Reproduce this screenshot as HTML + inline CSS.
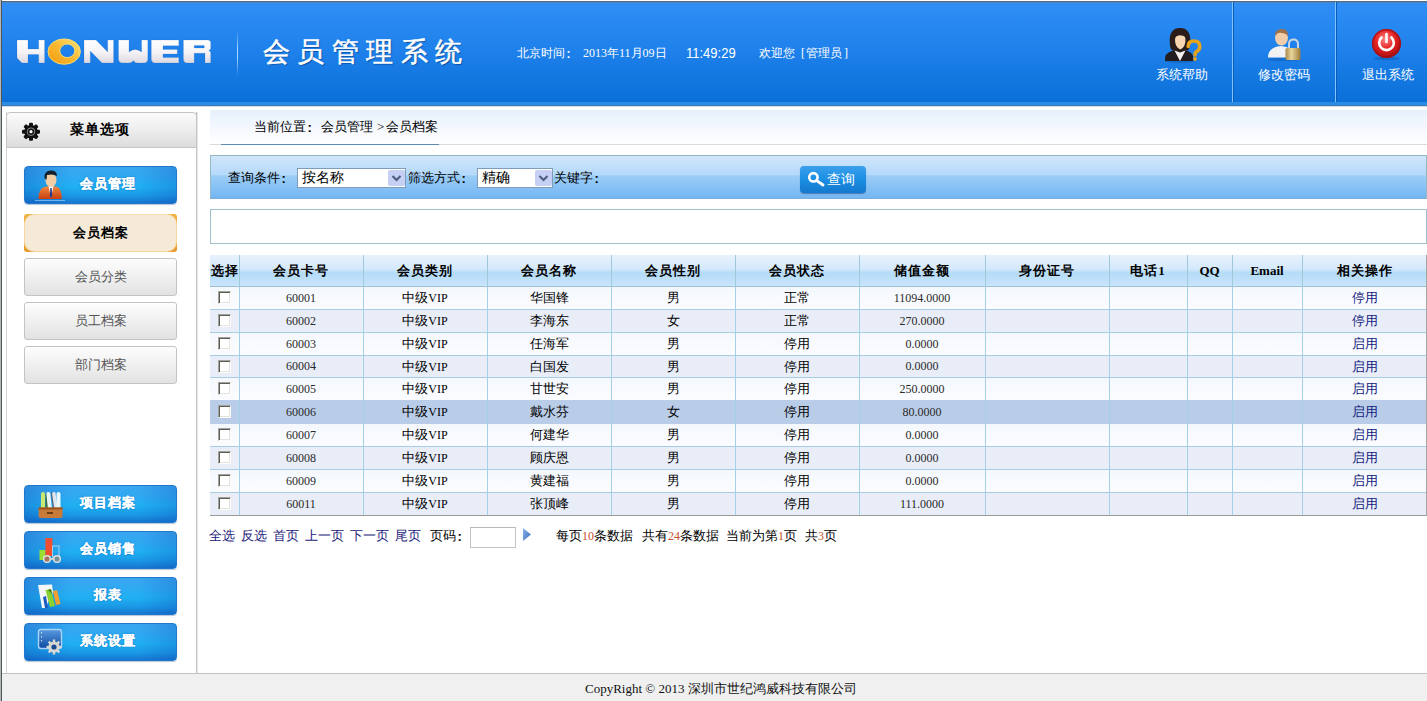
<!DOCTYPE html>
<html><head><meta charset="utf-8">
<style>
*{margin:0;padding:0;box-sizing:border-box}
html,body{width:1427px;height:701px;overflow:hidden;background:#fff}
body{position:relative;font-family:"Liberation Serif",serif;font-size:12px;color:#000}
.a{position:absolute}
.s{font-family:"Liberation Sans",sans-serif}
#hdr{left:0;top:2px;width:1427px;height:100px;background:linear-gradient(#4a84c4,#2f8ef5 2%,#2c8cf4 10%,#1e80ea 50%,#0a70d8)}
.vd{position:absolute;top:2px;width:2px;height:100px;background:linear-gradient(90deg,#7fc4fb 50%,#0a5cb8 50%)}
.ht{position:absolute;color:#fff;font-size:12px;white-space:nowrap;line-height:14px}
.hi{position:absolute;color:#fff;font-size:13px;white-space:nowrap;text-align:center;line-height:16px}
#panel{left:6px;top:112px;width:191px;height:561px;border-left:1px solid #d4d4d4;border-right:1px solid #c4c4c4;background:#fff;box-shadow:1px 0 0 #e6e6e6}
#ph{left:6px;top:112px;width:191px;height:36px;border:1px solid #c4c4c4;border-radius:4px 4px 0 0;background:linear-gradient(#fbfbfb,#f0f0f0 40%,#dcdcdc)}
.bb{position:absolute;left:24px;width:153px;height:38px;border-radius:4px;border:1px solid #1f78cc;background:linear-gradient(90deg,rgba(10,60,170,.28),rgba(10,60,170,0) 30%,rgba(10,60,170,0) 75%,rgba(10,60,170,.22)),linear-gradient(#3aa6f0,#2eaaf2 30%,#20b0f2 55%,#1a98e6 80%,#1676d0);box-shadow:0 1px 1px rgba(0,60,120,.3)}
.bb span{position:absolute;left:13px;top:-2px;-webkit-text-stroke:0.3px #fff;width:139px;text-align:center;line-height:38px;color:#fff;font-weight:bold;font-size:13px;letter-spacing:1px;text-shadow:0 0 2px #0a5ab0;white-space:nowrap}

.gb{position:absolute;left:24px;width:153px;height:38px;border:1px solid #c4c4c4;border-radius:3px;background:linear-gradient(#fdfdfd,#f0f0f0 50%,#e2e2e2);text-align:center;line-height:36px;color:#555;font-size:13px}
#crumb{left:210px;top:110px;width:1217px;height:34px;background:linear-gradient(#e6f1fc,#f6f9fe 60%,#fff)}
#sbar{left:210px;top:155px;width:1217px;height:44px;border:1px solid #94b8c4;border-bottom-color:#7aaed8;background:linear-gradient(#d0e6fb,#b4d9fa 45%,#9ccdf7 47%,#74b6f2)}
.sel{position:absolute;height:20px;border:1px solid #7f9db9;background:#fff;font-size:14px;line-height:18px;padding-left:4px;color:#000}
.sel i{position:absolute;right:1px;top:1px;width:17px;height:16px;background:#c6d4f2;border-radius:2px}
#res{left:210px;top:209px;width:1217px;height:35px;border:1px solid #a0c0cc;background:#fff}
.th{background:linear-gradient(#e8f2fd,#d4e9fb 45%,#b4dbf8 58%,#c9e5fb)}
.ro{background:linear-gradient(#f4f8fd,#fbfcff)}
.re{background:#e8edf8}
.hd{top:255px;height:31px;line-height:31px;text-align:center;font-size:13px;font-weight:bold;letter-spacing:1px;white-space:nowrap}
.td{text-align:center;font-size:13px;color:#000;white-space:nowrap}
.td.num{color:#2a2a2a;font-size:12px}
.td.op{color:#121a7c}
.cb{width:13px;height:13px;border:1px solid;border-color:#a4a49c #fcfcfc #fcfcfc #a4a49c;background:#fff;box-shadow:inset 1px 1px 0 #5c5c56,inset -1px -1px 0 #e4e4dc}
#foot{left:2px;top:673px;width:1425px;height:28px;border-top:1px solid #c2c2c2;background:#f0f0f0}
.lk{color:#1a1a7a}
.rd{color:#c8502a}
.sp{display:inline-block;width:6px}
.cl{display:inline-block;position:relative;top:1px;width:1em;text-indent:0.12em;font-family:"Liberation Sans",sans-serif;font-weight:bold}

</style></head>
<body>
<div class="a" style="left:0;top:0;width:1427px;height:1px;background:#fff"></div>
<div class="a" style="left:0;top:1px;width:1427px;height:1px;background:#5a6878"></div>
<div id="hdr" class="a"></div>
<div class="a" style="left:0;top:102px;width:1427px;height:3px;background:#2a8ce2"></div>
<div class="a" style="left:0;top:105px;width:1427px;height:1px;background:#3c78bc"></div>
<div class="a" style="left:0;top:106px;width:1427px;height:1px;background:#d2dde6"></div>
<div class="vd" style="left:237px;top:30px;height:46px;width:1px;background:linear-gradient(rgba(160,210,255,0),#a8d8ff 40%,#a8d8ff 60%,rgba(160,210,255,0))"></div>
<div class="vd" style="left:1232px"></div>
<div class="vd" style="left:1335px"></div>
<!-- LOGO -->
<div class="a" style="left:263px;top:34px;color:#fff;font-size:27px;line-height:36px;letter-spacing:7.4px;white-space:nowrap;-webkit-text-stroke:0.5px #fff;text-shadow:1px 1px 1px #0a4a9a">会员管理系统</div>
<div class="ht" style="left:517px;top:46px">北京时间<span class="cl">:</span><span class="sp"></span>2013年11月09日</div>
<div class="ht s" style="left:686px;top:46px;font-size:13px;line-height:16px;transform:scaleY(1.12);transform-origin:0 100%">11:49:29</div>
<div class="ht" style="left:759px;top:46px">欢迎您<span class="sp"></span>[<span style="margin:0 2px 0 1px">管理员</span>]</div>
<div class="hi" style="left:1156px;top:67px;width:52px">系统帮助</div>
<div class="hi" style="left:1258px;top:67px;width:52px">修改密码</div>
<div class="hi" style="left:1362px;top:67px;width:52px">退出系统</div>

<div id="panel" class="a"></div>
<div id="ph" class="a"></div>
<div class="a" style="left:70px;top:121px;font-size:14px;font-weight:bold;line-height:18px;letter-spacing:1px">菜单选项</div>
<div class="bb" style="top:166px"><span>会员管理</span></div>
<div class="a" style="left:24px;top:214px;width:153px;height:38px;border-radius:3px;background:linear-gradient(#f0b040,#e89a28);"><div class="a" style="left:1px;top:1px;width:151px;height:36px;border-radius:9px;background:#f5e9d7;box-shadow:0 0 0 1px rgba(255,250,235,.6);text-align:center;line-height:36px;font-weight:bold;font-size:13px;letter-spacing:1px">会员档案</div></div>
<div class="gb" style="top:258px">会员分类</div>
<div class="gb" style="top:302px">员工档案</div>
<div class="gb" style="top:346px">部门档案</div>
<div class="bb" style="top:485px"><span>项目档案</span></div>
<div class="bb" style="top:531px"><span>会员销售</span></div>
<div class="bb" style="top:577px"><span>报表</span></div>
<div class="bb" style="top:623px"><span>系统设置</span></div>

<div id="crumb" class="a"></div>
<div class="a" style="left:210px;top:144px;width:1217px;height:1px;background:#dadada"></div>
<div class="a" style="left:221px;top:144px;width:218px;height:1px;background:#5a8cb4"></div>
<div style="position:absolute;line-height:16px;white-space:nowrap;font-size:13px;left:254px;top:119px">当前位置<span class="cl">:</span></div><div style="position:absolute;line-height:16px;white-space:nowrap;font-size:13px;left:321px;top:119px">会员管理</div><div style="position:absolute;line-height:16px;white-space:nowrap;font-size:13px;left:377px;top:119px">&gt;</div><div style="position:absolute;line-height:16px;white-space:nowrap;font-size:13px;left:386px;top:119px">会员档案</div>
<div id="sbar" class="a"></div>
<div style="position:absolute;line-height:16px;white-space:nowrap;font-size:13px;left:228px;top:170px">查询条件<span class="cl">:</span></div>
<div class="sel" style="left:297px;top:168px;width:109px">按名称</div>
<div style="position:absolute;line-height:16px;white-space:nowrap;font-size:13px;left:408px;top:170px">筛选方式<span class="cl">:</span></div>
<div class="sel" style="left:477px;top:168px;width:76px">精确</div>
<div style="position:absolute;line-height:16px;white-space:nowrap;font-size:13px;left:554px;top:170px">关键字<span class="cl">:</span></div>
<div class="a" style="left:800px;top:166px;width:66px;height:27px;border-radius:4px;background:linear-gradient(#3ba0ec,#1b8ee4 50%,#1478cc);box-shadow:0 1px 1px rgba(0,40,100,.4)"><span style="position:absolute;left:27px;top:5px;color:#fff;font-size:14px;line-height:17px">查询</span></div>
<div id="res" class="a"></div>
<div class="a th" style="left:210px;top:255px;width:1217px;height:31px"></div>
<div class="a ro" style="left:210px;top:287px;width:1217px;height:22px"></div>
<div class="a re" style="left:210px;top:310px;width:1217px;height:22px"></div>
<div class="a ro" style="left:210px;top:333px;width:1217px;height:22px"></div>
<div class="a re" style="left:210px;top:356px;width:1217px;height:21px"></div>
<div class="a ro" style="left:210px;top:378px;width:1217px;height:22px"></div>
<div class="a" style="left:210px;top:400px;width:1217px;height:24px;background:#bacde8"></div>
<div class="a ro" style="left:210px;top:424px;width:1217px;height:22px"></div>
<div class="a re" style="left:210px;top:447px;width:1217px;height:22px"></div>
<div class="a ro" style="left:210px;top:470px;width:1217px;height:22px"></div>
<div class="a re" style="left:210px;top:493px;width:1217px;height:22px"></div>
<div class="a" style="left:210px;top:286px;width:1217px;height:1px;background:#a0c0cc"></div>
<div class="a" style="left:210px;top:309px;width:1217px;height:1px;background:#a6cde4"></div>
<div class="a" style="left:210px;top:332px;width:1217px;height:1px;background:#a6cde4"></div>
<div class="a" style="left:210px;top:355px;width:1217px;height:1px;background:#a6cde4"></div>
<div class="a" style="left:210px;top:377px;width:1217px;height:1px;background:#a6cde4"></div>
<div class="a" style="left:210px;top:446px;width:1217px;height:1px;background:#a6cde4"></div>
<div class="a" style="left:210px;top:469px;width:1217px;height:1px;background:#a6cde4"></div>
<div class="a" style="left:210px;top:492px;width:1217px;height:1px;background:#a6cde4"></div>
<div class="a" style="left:210px;top:515px;width:1217px;height:1px;background:#9a9a9a"></div>
<div class="a" style="left:239px;top:255px;width:1px;height:31px;background:#a0c8d8"></div>
<div class="a" style="left:239px;top:286px;width:1px;height:229px;background:#a6d0ea"></div>
<div class="a" style="left:363px;top:255px;width:1px;height:31px;background:#a0c8d8"></div>
<div class="a" style="left:363px;top:286px;width:1px;height:229px;background:#a6d0ea"></div>
<div class="a" style="left:487px;top:255px;width:1px;height:31px;background:#a0c8d8"></div>
<div class="a" style="left:487px;top:286px;width:1px;height:229px;background:#a6d0ea"></div>
<div class="a" style="left:611px;top:255px;width:1px;height:31px;background:#a0c8d8"></div>
<div class="a" style="left:611px;top:286px;width:1px;height:229px;background:#a6d0ea"></div>
<div class="a" style="left:735px;top:255px;width:1px;height:31px;background:#a0c8d8"></div>
<div class="a" style="left:735px;top:286px;width:1px;height:229px;background:#a6d0ea"></div>
<div class="a" style="left:859px;top:255px;width:1px;height:31px;background:#a0c8d8"></div>
<div class="a" style="left:859px;top:286px;width:1px;height:229px;background:#a6d0ea"></div>
<div class="a" style="left:985px;top:255px;width:1px;height:31px;background:#a0c8d8"></div>
<div class="a" style="left:985px;top:286px;width:1px;height:229px;background:#a6d0ea"></div>
<div class="a" style="left:1109px;top:255px;width:1px;height:31px;background:#a0c8d8"></div>
<div class="a" style="left:1109px;top:286px;width:1px;height:229px;background:#a6d0ea"></div>
<div class="a" style="left:1187px;top:255px;width:1px;height:31px;background:#a0c8d8"></div>
<div class="a" style="left:1187px;top:286px;width:1px;height:229px;background:#a6d0ea"></div>
<div class="a" style="left:1232px;top:255px;width:1px;height:31px;background:#a0c8d8"></div>
<div class="a" style="left:1232px;top:286px;width:1px;height:229px;background:#a6d0ea"></div>
<div class="a" style="left:1302px;top:255px;width:1px;height:31px;background:#a0c8d8"></div>
<div class="a" style="left:1302px;top:286px;width:1px;height:229px;background:#a6d0ea"></div>
<div class="a" style="left:1426px;top:255px;width:1px;height:261px;background:#a4a4a4"></div>
<div class="a hd" style="left:210px;width:29px">选择</div>
<div class="a hd" style="left:239px;width:124px">会员卡号</div>
<div class="a hd" style="left:363px;width:124px">会员类别</div>
<div class="a hd" style="left:487px;width:124px">会员名称</div>
<div class="a hd" style="left:611px;width:124px">会员性别</div>
<div class="a hd" style="left:735px;width:124px">会员状态</div>
<div class="a hd" style="left:859px;width:126px">储值金额</div>
<div class="a hd" style="left:985px;width:124px">身份证号</div>
<div class="a hd" style="left:1109px;width:78px">电话1</div>
<div class="a hd" style="left:1187px;width:45px;letter-spacing:0">QQ</div>
<div class="a hd" style="left:1232px;width:70px;letter-spacing:0">Email</div>
<div class="a hd" style="left:1302px;width:125px">相关操作</div>
<div class="a cb" style="left:218px;top:291px"></div>
<div class="a td num" style="left:239px;top:287px;width:124px;height:22px;line-height:22px">60001</div>
<div class="a td cn" style="left:363px;top:287px;width:124px;height:22px;line-height:22px">中级<span style="font-size:12px">VIP</span></div>
<div class="a td cn" style="left:487px;top:287px;width:124px;height:22px;line-height:22px">华国锋</div>
<div class="a td cn" style="left:611px;top:287px;width:124px;height:22px;line-height:22px">男</div>
<div class="a td cn" style="left:735px;top:287px;width:124px;height:22px;line-height:22px">正常</div>
<div class="a td num" style="left:859px;top:287px;width:126px;height:22px;line-height:22px">11094.0000</div>
<div class="a td op" style="left:1302px;top:287px;width:125px;height:22px;line-height:22px">停用</div>
<div class="a cb" style="left:218px;top:314px"></div>
<div class="a td num" style="left:239px;top:310px;width:124px;height:22px;line-height:22px">60002</div>
<div class="a td cn" style="left:363px;top:310px;width:124px;height:22px;line-height:22px">中级<span style="font-size:12px">VIP</span></div>
<div class="a td cn" style="left:487px;top:310px;width:124px;height:22px;line-height:22px">李海东</div>
<div class="a td cn" style="left:611px;top:310px;width:124px;height:22px;line-height:22px">女</div>
<div class="a td cn" style="left:735px;top:310px;width:124px;height:22px;line-height:22px">正常</div>
<div class="a td num" style="left:859px;top:310px;width:126px;height:22px;line-height:22px">270.0000</div>
<div class="a td op" style="left:1302px;top:310px;width:125px;height:22px;line-height:22px">停用</div>
<div class="a cb" style="left:218px;top:337px"></div>
<div class="a td num" style="left:239px;top:333px;width:124px;height:22px;line-height:22px">60003</div>
<div class="a td cn" style="left:363px;top:333px;width:124px;height:22px;line-height:22px">中级<span style="font-size:12px">VIP</span></div>
<div class="a td cn" style="left:487px;top:333px;width:124px;height:22px;line-height:22px">任海军</div>
<div class="a td cn" style="left:611px;top:333px;width:124px;height:22px;line-height:22px">男</div>
<div class="a td cn" style="left:735px;top:333px;width:124px;height:22px;line-height:22px">停用</div>
<div class="a td num" style="left:859px;top:333px;width:126px;height:22px;line-height:22px">0.0000</div>
<div class="a td op" style="left:1302px;top:333px;width:125px;height:22px;line-height:22px">启用</div>
<div class="a cb" style="left:218px;top:360px"></div>
<div class="a td num" style="left:239px;top:356px;width:124px;height:21px;line-height:21px">60004</div>
<div class="a td cn" style="left:363px;top:356px;width:124px;height:21px;line-height:21px">中级<span style="font-size:12px">VIP</span></div>
<div class="a td cn" style="left:487px;top:356px;width:124px;height:21px;line-height:21px">白国发</div>
<div class="a td cn" style="left:611px;top:356px;width:124px;height:21px;line-height:21px">男</div>
<div class="a td cn" style="left:735px;top:356px;width:124px;height:21px;line-height:21px">停用</div>
<div class="a td num" style="left:859px;top:356px;width:126px;height:21px;line-height:21px">0.0000</div>
<div class="a td op" style="left:1302px;top:356px;width:125px;height:21px;line-height:21px">启用</div>
<div class="a cb" style="left:218px;top:382px"></div>
<div class="a td num" style="left:239px;top:378px;width:124px;height:22px;line-height:22px">60005</div>
<div class="a td cn" style="left:363px;top:378px;width:124px;height:22px;line-height:22px">中级<span style="font-size:12px">VIP</span></div>
<div class="a td cn" style="left:487px;top:378px;width:124px;height:22px;line-height:22px">甘世安</div>
<div class="a td cn" style="left:611px;top:378px;width:124px;height:22px;line-height:22px">男</div>
<div class="a td cn" style="left:735px;top:378px;width:124px;height:22px;line-height:22px">停用</div>
<div class="a td num" style="left:859px;top:378px;width:126px;height:22px;line-height:22px">250.0000</div>
<div class="a td op" style="left:1302px;top:378px;width:125px;height:22px;line-height:22px">启用</div>
<div class="a cb" style="left:218px;top:405px"></div>
<div class="a td num" style="left:239px;top:401px;width:124px;height:22px;line-height:22px">60006</div>
<div class="a td cn" style="left:363px;top:401px;width:124px;height:22px;line-height:22px">中级<span style="font-size:12px">VIP</span></div>
<div class="a td cn" style="left:487px;top:401px;width:124px;height:22px;line-height:22px">戴水芬</div>
<div class="a td cn" style="left:611px;top:401px;width:124px;height:22px;line-height:22px">女</div>
<div class="a td cn" style="left:735px;top:401px;width:124px;height:22px;line-height:22px">停用</div>
<div class="a td num" style="left:859px;top:401px;width:126px;height:22px;line-height:22px">80.0000</div>
<div class="a td op" style="left:1302px;top:401px;width:125px;height:22px;line-height:22px">启用</div>
<div class="a cb" style="left:218px;top:428px"></div>
<div class="a td num" style="left:239px;top:424px;width:124px;height:22px;line-height:22px">60007</div>
<div class="a td cn" style="left:363px;top:424px;width:124px;height:22px;line-height:22px">中级<span style="font-size:12px">VIP</span></div>
<div class="a td cn" style="left:487px;top:424px;width:124px;height:22px;line-height:22px">何建华</div>
<div class="a td cn" style="left:611px;top:424px;width:124px;height:22px;line-height:22px">男</div>
<div class="a td cn" style="left:735px;top:424px;width:124px;height:22px;line-height:22px">停用</div>
<div class="a td num" style="left:859px;top:424px;width:126px;height:22px;line-height:22px">0.0000</div>
<div class="a td op" style="left:1302px;top:424px;width:125px;height:22px;line-height:22px">启用</div>
<div class="a cb" style="left:218px;top:451px"></div>
<div class="a td num" style="left:239px;top:447px;width:124px;height:22px;line-height:22px">60008</div>
<div class="a td cn" style="left:363px;top:447px;width:124px;height:22px;line-height:22px">中级<span style="font-size:12px">VIP</span></div>
<div class="a td cn" style="left:487px;top:447px;width:124px;height:22px;line-height:22px">顾庆恩</div>
<div class="a td cn" style="left:611px;top:447px;width:124px;height:22px;line-height:22px">男</div>
<div class="a td cn" style="left:735px;top:447px;width:124px;height:22px;line-height:22px">停用</div>
<div class="a td num" style="left:859px;top:447px;width:126px;height:22px;line-height:22px">0.0000</div>
<div class="a td op" style="left:1302px;top:447px;width:125px;height:22px;line-height:22px">启用</div>
<div class="a cb" style="left:218px;top:474px"></div>
<div class="a td num" style="left:239px;top:470px;width:124px;height:22px;line-height:22px">60009</div>
<div class="a td cn" style="left:363px;top:470px;width:124px;height:22px;line-height:22px">中级<span style="font-size:12px">VIP</span></div>
<div class="a td cn" style="left:487px;top:470px;width:124px;height:22px;line-height:22px">黄建福</div>
<div class="a td cn" style="left:611px;top:470px;width:124px;height:22px;line-height:22px">男</div>
<div class="a td cn" style="left:735px;top:470px;width:124px;height:22px;line-height:22px">停用</div>
<div class="a td num" style="left:859px;top:470px;width:126px;height:22px;line-height:22px">0.0000</div>
<div class="a td op" style="left:1302px;top:470px;width:125px;height:22px;line-height:22px">启用</div>
<div class="a cb" style="left:218px;top:497px"></div>
<div class="a td num" style="left:239px;top:493px;width:124px;height:22px;line-height:22px">60011</div>
<div class="a td cn" style="left:363px;top:493px;width:124px;height:22px;line-height:22px">中级<span style="font-size:12px">VIP</span></div>
<div class="a td cn" style="left:487px;top:493px;width:124px;height:22px;line-height:22px">张顶峰</div>
<div class="a td cn" style="left:611px;top:493px;width:124px;height:22px;line-height:22px">男</div>
<div class="a td cn" style="left:735px;top:493px;width:124px;height:22px;line-height:22px">停用</div>
<div class="a td num" style="left:859px;top:493px;width:126px;height:22px;line-height:22px">111.0000</div>
<div class="a td op" style="left:1302px;top:493px;width:125px;height:22px;line-height:22px">启用</div>
<div class="lk" style="position:absolute;line-height:16px;white-space:nowrap;font-size:13px;left:209px;top:528px">全选</div><div class="lk" style="position:absolute;line-height:16px;white-space:nowrap;font-size:13px;left:241px;top:528px">反选</div><div class="lk" style="position:absolute;line-height:16px;white-space:nowrap;font-size:13px;left:273px;top:528px">首页</div><div class="lk" style="position:absolute;line-height:16px;white-space:nowrap;font-size:13px;left:305px;top:528px">上一页</div><div class="lk" style="position:absolute;line-height:16px;white-space:nowrap;font-size:13px;left:350px;top:528px">下一页</div><div class="lk" style="position:absolute;line-height:16px;white-space:nowrap;font-size:13px;left:395px;top:528px">尾页</div><div style="position:absolute;line-height:16px;white-space:nowrap;font-size:13px;left:430px;top:528px">页码<span class="cl">:</span></div>
<div class="a" style="left:470px;top:527px;width:46px;height:21px;border:1px solid #c4c4c4;border-top-color:#b8b8b8;background:#fff"></div>
<div style="position:absolute;line-height:16px;white-space:nowrap;font-size:13px;left:556px;top:528px">每页<span class="rd" style="font-size:12px">10</span>条数据</div><div style="position:absolute;line-height:16px;white-space:nowrap;font-size:13px;left:642px;top:528px">共有<span class="rd" style="font-size:12px">24</span>条数据</div><div style="position:absolute;line-height:16px;white-space:nowrap;font-size:13px;left:726px;top:528px">当前为第<span class="rd" style="font-size:12px">1</span>页</div><div style="position:absolute;line-height:16px;white-space:nowrap;font-size:13px;left:805px;top:528px">共<span class="rd" style="font-size:12px">3</span>页</div>
<div id="foot" class="a"></div>
<div class="a" style="left:585px;top:681px;line-height:16px;font-size:13px;white-space:nowrap;color:#111">CopyRight © 2013 深圳市世纪鸿威科技有限公司</div>
<svg class="a" style="left:0;top:0" width="1427" height="701" viewBox="0 0 1427 701">
<defs>
<linearGradient id="lw" x1="0" y1="0" x2="0" y2="1"><stop offset="0" stop-color="#ffffff"/><stop offset="0.55" stop-color="#f4f2f6"/><stop offset="1" stop-color="#dcd8e0"/></linearGradient>
<linearGradient id="lo" x1="1" y1="0" x2="0" y2="1"><stop offset="0" stop-color="#ffe27a"/><stop offset="0.5" stop-color="#f8b830"/><stop offset="1" stop-color="#f39a10"/></linearGradient>
<radialGradient id="pw" cx="0.45" cy="0.35" r="0.65"><stop offset="0" stop-color="#ff8a8a"/><stop offset="0.5" stop-color="#e82424"/><stop offset="1" stop-color="#a80c0c"/></radialGradient>
<linearGradient id="gold" x1="0" y1="0" x2="1" y2="0"><stop offset="0" stop-color="#a88a48"/><stop offset="0.4" stop-color="#e8d49a"/><stop offset="1" stop-color="#9c7c3c"/></linearGradient>
<linearGradient id="org" x1="0" y1="0" x2="0" y2="1"><stop offset="0" stop-color="#f08a40"/><stop offset="1" stop-color="#c84010"/></linearGradient>
<linearGradient id="tri" x1="0" y1="0" x2="1" y2="1"><stop offset="0" stop-color="#8ab8f0"/><stop offset="1" stop-color="#3c6ab8"/></linearGradient>
<linearGradient id="mon" x1="0" y1="0" x2="0" y2="1"><stop offset="0" stop-color="#5a9ae0"/><stop offset="1" stop-color="#0c4aa0"/></linearGradient>
</defs>
<!-- logo -->
<g fill="url(#lw)" stroke="#1a5aa8" stroke-opacity="0.25" stroke-width="0.6">
<path d="M17,40 H28 V48.9 H38.7 V40 H44.6 V63 H38.7 V54.5 H28 V63 H22 L17,58 Z"/>
<path d="M84,40 H96 L107.7,52 V40 H113.6 V63 H102 L90.3,51 V63 H84 Z"/>
<path d="M118.5,40 H129 V52 Q135,47 141.6,52 V40 H147.8 V59 Q147.8,63 144,63 H137.5 Q134.5,63 133.5,60.5 Q132,63 128.5,63 H122.5 Q118.5,63 118.5,59 Z"/>
<path d="M151.3,40 H178.8 V45.8 H163 V49.4 H177.3 V54 H163 V57.6 H178.8 V63 H155.3 Q151.3,63 151.3,59 Z"/>
<path fill-rule="evenodd" d="M183.4,40 H207.7 Q210.7,40 210.7,43 V49 L208.8,50.5 L210.7,52 V63 H205 V53.3 H194.2 V63 H187.4 Q183.4,63 183.4,59 Z M194.2,45.6 H204.3 V48 H194.2 Z"/>
</g>
<path fill-rule="evenodd" fill="url(#lo)" stroke="#ffe070" stroke-width="0.9" d="M48,51.6 A16.2,12.7 0 1,0 80.4,51.6 A16.2,12.7 0 1,0 48,51.6 Z M59.8,50.8 A7.5,6.8 0 1,0 74.8,50.8 A7.5,6.8 0 1,0 59.8,50.8 Z"/>
<!-- header icon: woman help -->
<g>
<ellipse cx="1180" cy="61" rx="15" ry="2" fill="#0a4a9a" opacity="0.35"/>
<path d="M1170,45 Q1168,28 1180,28 Q1192,28 1190,45 Q1190,50 1186,51 L1174,51 Q1170,50 1170,45 Z" fill="#2a1c18"/>
<path d="M1165,61 Q1164,53 1172,51 L1180,50 L1188,51 Q1194,53 1193,61 Z" fill="#221e20"/>
<path d="M1174.5,50.5 L1180,61 L1185.5,50.5 L1180,52.5 Z" fill="#f4f2ee"/>
<path d="M1175,40 Q1175,34 1180.5,34 Q1185.5,34 1185.5,40 Q1185.5,47 1180.3,49.5 Q1175,47 1175,40 Z" fill="#f6d6b2"/>
<path d="M1174,38 Q1176,31 1182,32 Q1186,33 1187,38 Q1182,34 1177,36 Z" fill="#2a1c18"/>
<path d="M1188.2,46.5 Q1188.2,41 1193.8,41 Q1199.8,41 1199.8,46.5 Q1199.8,50 1196,52 Q1195,52.8 1195,55" fill="none" stroke="#e6a21a" stroke-width="3.6" stroke-linecap="round"/>
<circle cx="1195" cy="59" r="1.9" fill="#e6a21a"/>
</g>
<!-- header icon: man lock -->
<g>
<ellipse cx="1284" cy="59.5" rx="16" ry="1.8" fill="#0a4a9a" opacity="0.35"/>
<path d="M1268,57.5 Q1268,47 1281,46 Q1293,47 1293,57.5 Z" fill="#f2f2f4"/>
<ellipse cx="1281.5" cy="37.5" rx="6.5" ry="8" fill="#f0cca8"/>
<path d="M1275,36 Q1275,29 1282,29 Q1288,29 1288,36 Q1284,32 1278,33 Z" fill="#a07048"/>
<path d="M1289,49 V44 Q1289,39.5 1293.5,39.5 Q1298,39.5 1298,44 V49" fill="none" stroke="#c8d4e4" stroke-width="2"/>
<rect x="1285.5" y="48" width="15" height="12" rx="1.5" fill="url(#gold)"/>
</g>
<!-- power -->
<ellipse cx="1386.5" cy="58.5" rx="13" ry="1.8" fill="#0a4a9a" opacity="0.35"/>
<circle cx="1386.5" cy="43.5" r="14.5" fill="url(#pw)"/>
<circle cx="1386.5" cy="43.5" r="13.8" fill="none" stroke="#a01018" stroke-opacity="0.8" stroke-width="1.4"/>
<path d="M1381.5,37.5 A7.3,7.3 0 1,0 1391.5,37.5" fill="none" stroke="#fff" stroke-width="2.6" stroke-linecap="round"/>
<line x1="1386.5" y1="34" x2="1386.5" y2="42" stroke="#fff" stroke-width="2.6" stroke-linecap="round"/>
<!-- gear -->
<g transform="translate(31 131.7)">
<g fill="#111">
<circle r="6.8"/>
<rect x="-2" y="-9" width="4" height="18" rx="1.2"/>
<rect x="-2" y="-9" width="4" height="18" rx="1.2" transform="rotate(45)"/>
<rect x="-2" y="-9" width="4" height="18" rx="1.2" transform="rotate(90)"/>
<rect x="-2" y="-9" width="4" height="18" rx="1.2" transform="rotate(135)"/>
</g>
<circle r="3.8" fill="none" stroke="#8a8a8a" stroke-width="1"/>
<circle r="1.6" fill="#fff"/>
</g>
<!-- person orange -->
<g>
<path d="M38.5,199 Q38,188 46,186.5 L51,186 L56,186.5 Q62,188 61.8,199 Z" fill="url(#org)"/>
<path d="M48.5,186 L51,198 L53.5,186 Z" fill="#fff"/>
<path d="M50.3,188 L51.7,188 L52.2,196 L51,198 L49.8,196 Z" fill="#2a3a8a"/>
<ellipse cx="51" cy="180" rx="5.5" ry="7" fill="#f2cea6"/>
<path d="M44.5,178 Q44,170.5 51,170.5 Q57,170.5 57,176 Q53,173.5 47,175 L46.5,180 Z" fill="#15202a"/>
<rect x="35" y="200" width="30" height="1" fill="#a8d8ff" opacity="0.6"/>
</g>
<!-- books tray -->
<g>
<rect x="41" y="492" width="4" height="18" rx="2" fill="#c8e870"/>
<rect x="45.5" y="493" width="4" height="17" rx="2" fill="#3a6a3a"/>
<rect x="47" y="492" width="4" height="18" rx="2" fill="#e8f4f4" transform="rotate(-6 49 500)"/>
<rect x="52" y="492" width="4" height="18" rx="2" fill="#505a70" transform="rotate(-8 54 500)"/>
<rect x="53" y="492" width="3.5" height="18" rx="1.7" fill="#dfe6ee" transform="rotate(-8 54 500)"/>
<rect x="56.5" y="492" width="4" height="18" rx="2" fill="#e8f8f8"/>
<path d="M38.6,507.5 H62.5 V516 Q62.5,518 60.5,518 H40.6 Q38.6,518 38.6,516 Z" fill="#c87a38"/>
<rect x="38.6" y="507.5" width="24" height="2" fill="#9a5420"/>
<rect x="47" y="512" width="6" height="2" fill="#6a3a10"/>
</g>
<!-- chart binoculars -->
<g>
<rect x="39.5" y="550" width="6" height="10" fill="#9ae030"/>
<rect x="45.4" y="538" width="7" height="18" fill="#f05030"/>
<rect x="52.5" y="546" width="6.5" height="11" fill="none" stroke="#a8d0f0" stroke-width="1"/>
<circle cx="47" cy="559" r="3.3" fill="#a07060" stroke="#e0e0e0" stroke-width="1.5"/>
<circle cx="57" cy="559" r="3.3" fill="#7090a0" stroke="#e0e0e0" stroke-width="1.5"/>
<rect x="49.5" y="558" width="5" height="2" fill="#d0d0d0"/>
</g>
<!-- report -->
<g>
<path d="M38,585 L52,584.5 L53,592 L45.5,608 L42,608 Z" fill="#f4f6f8"/>
<path d="M43,597 L46,596 L48,608 L45,608 Z" fill="#1e5ac0"/>
<path d="M45.5,590 L51,589 L55,606 L50,607 Z" fill="#8ad030"/>
<path d="M48,590 L51,589 L52,594 Z" fill="#3a7a20"/>
<path d="M53,591 L57,590 L60.5,604 L56,605 Z" fill="#f0a030"/>
</g>
<!-- monitor gear -->
<g>
<rect x="38.5" y="629.5" width="23" height="19" rx="2.5" fill="url(#mon)" stroke="#a8d4f8" stroke-width="1.4"/>
<rect x="41" y="632" width="1" height="1.5" fill="#cde"/>
<rect x="41" y="636" width="1" height="1.5" fill="#cde"/>
<rect x="41" y="640" width="1" height="1.5" fill="#cde"/>
<g transform="translate(54 647)">
<circle r="5.6" fill="#d8d8d4"/>
<g fill="#d8d8d4"><rect x="-1.2" y="-7.5" width="2.4" height="15"/><rect x="-1.2" y="-7.5" width="2.4" height="15" transform="rotate(45)"/><rect x="-1.2" y="-7.5" width="2.4" height="15" transform="rotate(90)"/><rect x="-1.2" y="-7.5" width="2.4" height="15" transform="rotate(135)"/></g>
<circle r="2.6" fill="#1a4a90"/>
</g>
</g>
<!-- magnifier -->
<circle cx="813.4" cy="177.3" r="4.2" fill="none" stroke="#fff" stroke-width="2.6"/>
<line x1="816.8" y1="180.6" x2="823" y2="185" stroke="#fff" stroke-width="3" stroke-linecap="round"/>
<!-- select buttons -->
<g>
<rect x="388" y="170" width="17" height="16" rx="2" fill="#c6cff4"/>
<path d="M392.5,176 L396.5,180 L400.5,176" fill="none" stroke="#4a5c80" stroke-width="2"/>
<rect x="535" y="170" width="17" height="16" rx="2" fill="#c6cff4"/>
<path d="M539.5,176 L543.5,180 L547.5,176" fill="none" stroke="#4a5c80" stroke-width="2"/>
</g>
<!-- page triangle -->
<path d="M523,528 L531,534.5 L523,541 Z" fill="url(#tri)"/>
</svg>

<div class="a" style="left:0;top:0;width:1px;height:701px;background:#b4b8b4"></div>
<div class="a" style="left:1px;top:0;width:1px;height:701px;background:#50565c"></div>

</body></html>
